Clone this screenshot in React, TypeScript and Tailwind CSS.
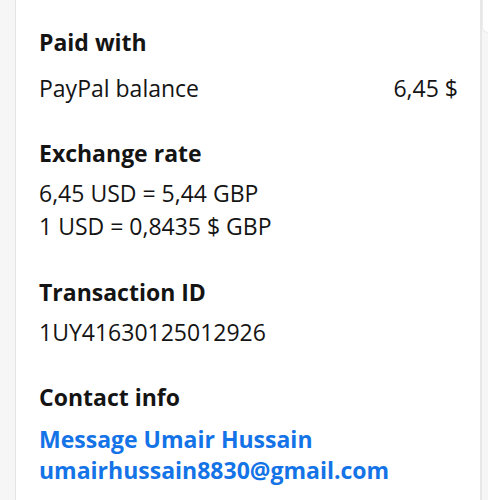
export default function App() {
  return (
    <div
      className="flex h-[500px] w-full overflow-hidden bg-[#f6f6f6] text-[23px] text-[#141414]"
      style={{ fontFamily: '"Open Sans", "Noto Sans", sans-serif' }}
    >
      {/* left gutter */}
      <div className="w-4 shrink-0 border-r border-[#e4e4e4]" />

      {/* details card */}
      <div className="flex-1 bg-white pl-[23px] pr-[22px] pt-[26px]">
        <section>
          <h2 className="font-bold leading-[32px]">Paid with</h2>
          <div className="mt-[14px] flex items-center justify-between leading-[32px]">
            <span>PayPal balance</span>
            <span>6,45 $</span>
          </div>
        </section>

        <section className="mt-[33px]">
          <h2 className="font-bold leading-[32px]">Exchange rate</h2>
          <div className="mt-2 leading-[33px]">
            <p>6,45 USD = 5,44 GBP</p>
            <p>1 USD = 0,8435 $ GBP</p>
          </div>
        </section>

        <section className="mt-[33px]">
          <h2 className="font-bold leading-[32px]">Transaction ID</h2>
          <p className="mt-2 leading-[32px]">1UY41630125012926</p>
        </section>

        <section className="mt-[33px]">
          <h2 className="font-bold leading-[32px]">Contact info</h2>
          <div className="mt-[11px] flex flex-col items-start font-bold leading-[31px] text-[#1473e6]">
            <a href="#">Message Umair Hussain</a>
            <a href="#">umairhussain8830@gmail.com</a>
          </div>
        </section>
      </div>

      {/* right rail */}
      <div className="w-2 shrink-0 border-l-2 border-[#e8e8e8]">
        <div className="h-[33px] rounded-bl-xl border-b border-l border-[#ececec] bg-white" />
      </div>
    </div>
  );
}
